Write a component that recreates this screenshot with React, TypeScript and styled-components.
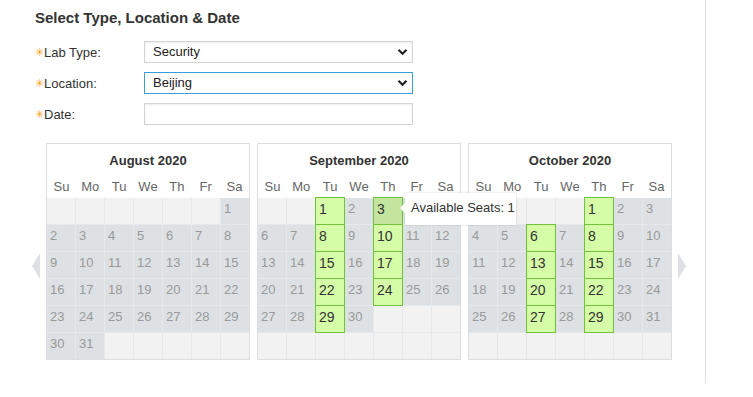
import styled, { createGlobalStyle } from "styled-components"

const GlobalStyle = createGlobalStyle`
  body {
    margin: 0;
    background: #fff;
    font-family: "Liberation Sans", Arial, sans-serif;
    color: #333;
  }
`

type Day = { n?: number; open?: boolean; hover?: boolean }

const buildMonth = (offset: number, days: number, open: number[], hover?: number): Day[] => {
  const cells: Day[] = []
  for (let i = 0; i < offset; i++) cells.push({})
  for (let d = 1; d <= days; d++) {
    cells.push({ n: d, open: open.includes(d), hover: d === hover })
  }
  while (cells.length < 42) cells.push({})
  return cells
}

const months = [
  { title: "August 2020", cells: buildMonth(6, 31, []) },
  {
    title: "September 2020",
    cells: buildMonth(2, 30, [1, 3, 8, 10, 15, 17, 22, 24, 29], 3),
  },
  {
    title: "October 2020",
    cells: buildMonth(4, 31, [1, 6, 8, 13, 15, 20, 22, 27, 29]),
  },
]

const weekDays = ["Su", "Mo", "Tu", "We", "Th", "Fr", "Sa"]

const Chevron = () => (
  <svg width="11" height="8" viewBox="0 0 11 8">
    <path d="M1.5 1.8 L5.5 5.8 L9.5 1.8" fill="none" stroke="#222" strokeWidth="2.2" />
  </svg>
)

const App = () => {
  return (
    <>
      <GlobalStyle />
      <Page>
        <Title>Select Type, Location &amp; Date</Title>
        <Form>
          <Row>
            <Label>
              <Star>✳</Star>Lab Type:
            </Label>
            <SelectBox>
              Security
              <ChevronSlot>
                <Chevron />
              </ChevronSlot>
            </SelectBox>
          </Row>
          <Row>
            <Label>
              <Star>✳</Star>Location:
            </Label>
            <SelectBox focused>
              Beijing
              <ChevronSlot>
                <Chevron />
              </ChevronSlot>
            </SelectBox>
          </Row>
          <Row>
            <Label>
              <Star>✳</Star>Date:
            </Label>
            <TextBox />
          </Row>
        </Form>
        <CalendarRow>
          <Arrow dir="left" />
          <Months>
            {months.map((m) => (
              <Month key={m.title}>
                <MonthHead>
                  <MonthTitle>{m.title}</MonthTitle>
                  <WeekRow>
                    {weekDays.map((w) => (
                      <WeekDay key={w}>{w}</WeekDay>
                    ))}
                  </WeekRow>
                </MonthHead>
                <Grid>
                  {m.cells.map((c, i) => (
                    <Cell
                      key={i}
                      kind={c.n ? (c.hover ? "hover" : c.open ? "open" : "day") : "empty"}
                    >
                      {c.n}
                      {c.hover && (
                        <Tooltip>Available Seats: 1</Tooltip>
                      )}
                    </Cell>
                  ))}
                </Grid>
              </Month>
            ))}
          </Months>
          <Arrow dir="right" />
        </CalendarRow>
      </Page>
    </>
  )
}

const Page = styled.div`
  width: 706px;
  height: 383px;
  border-right: 1px solid #dde2e6;
  box-sizing: border-box;
  padding-top: 9px;
`

const Title = styled.div`
  margin-left: 35px;
  font-size: 15px;
  line-height: 18px;
  font-weight: bold;
  color: #333;
`

const Form = styled.div`
  margin: 14px 0 0 35px;
  display: flex;
  flex-direction: column;
  gap: 9px;
`

const Row = styled.div`
  display: flex;
  align-items: center;
  height: 22px;
`

const Label = styled.div`
  width: 109px;
  font-size: 13px;
  color: #333;
  display: flex;
  align-items: center;
`

const Star = styled.span`
  color: #f5a623;
  font-size: 11px;
  width: 9px;
`

const SelectBox = styled.div<{ focused?: boolean }>`
  position: relative;
  width: 269px;
  height: 22px;
  box-sizing: border-box;
  border: 1px solid ${(p) => (p.focused ? "#3a9fd8" : "#d4d4d4")};
  box-shadow: ${(p) => (p.focused ? "none" : "inset 0 1px 2px rgba(0,0,0,0.08)")};
  padding-left: 8px;
  font-size: 13px;
  line-height: 20px;
  color: #222;
  background: #fff;
`

const ChevronSlot = styled.span`
  position: absolute;
  right: 4px;
  top: 6px;
  display: flex;
`

const TextBox = styled.div`
  width: 269px;
  height: 22px;
  box-sizing: border-box;
  border: 1px solid #d4d4d4;
  box-shadow: inset 0 1px 2px rgba(0, 0, 0, 0.08);
  background: #fff;
`

const CalendarRow = styled.div`
  margin-top: 18px;
  padding-left: 32px;
  display: flex;
  align-items: flex-start;
  gap: 6px;
`

const Arrow = styled.div<{ dir: "left" | "right" }>`
  margin-top: 110px;
  width: 0;
  height: 0;
  border-top: 13px solid transparent;
  border-bottom: 13px solid transparent;
  ${(p) =>
    p.dir === "left"
      ? "border-right: 8px solid #dde1e4;"
      : "border-left: 8px solid #dde1e4;"}
`

const Months = styled.div`
  display: flex;
  gap: 7px;
`

const Month = styled.div`
  width: 204px;
  box-sizing: border-box;
  border: 1px solid #dcdfe2;
  background: #fff;
`

const MonthHead = styled.div`
  height: 54px;
  display: flex;
  flex-direction: column;
`

const MonthTitle = styled.div`
  margin-top: 9px;
  text-align: center;
  font-size: 13px;
  font-weight: bold;
  line-height: 16px;
  color: #333;
`

const WeekRow = styled.div`
  margin-top: 10px;
  display: grid;
  grid-template-columns: repeat(7, 1fr);
`

const WeekDay = styled.div`
  text-align: center;
  font-size: 13px;
  line-height: 16px;
  color: #666;
`

const Grid = styled.div`
  display: grid;
  grid-template-columns: repeat(7, 1fr);
  grid-auto-rows: 26px;
  gap: 1px;
  background: #e6e9eb;
`

const cellBg = {
  empty: "#f2f2f2",
  day: "#dde1e4",
  open: "#d5fca6",
  hover: "#c3e59d",
}

const Cell = styled.div<{ kind: "empty" | "day" | "open" | "hover" }>`
  position: relative;
  background: ${(p) => cellBg[p.kind]};
  padding: 3px 0 0 3px;
  box-sizing: border-box;
  font-size: ${(p) => (p.kind === "open" || p.kind === "hover" ? "14px" : "13px")};
  line-height: 16px;
  color: ${(p) => (p.kind === "open" || p.kind === "hover" ? "#333" : "#999")};
  ${(p) =>
    p.kind === "open" || p.kind === "hover"
      ? "box-shadow: 0 0 0 1px #72c23e; z-index: 1;"
      : ""}
`

const Tooltip = styled.div`
  position: absolute;
  left: 31px;
  top: -5px;
  width: 111px;
  height: 32px;
  box-sizing: border-box;
  padding: 0 6px;
  background: #fff;
  box-shadow: 0 0 2px rgba(0, 0, 0, 0.18);
  font-size: 13px;
  line-height: 30px;
  color: #333;
  white-space: nowrap;
  z-index: 2;

  &::before {
    content: "";
    position: absolute;
    left: -5px;
    top: 10px;
    border-top: 5px solid transparent;
    border-bottom: 5px solid transparent;
    border-right: 5px solid #fff;
  }
`

export default App
